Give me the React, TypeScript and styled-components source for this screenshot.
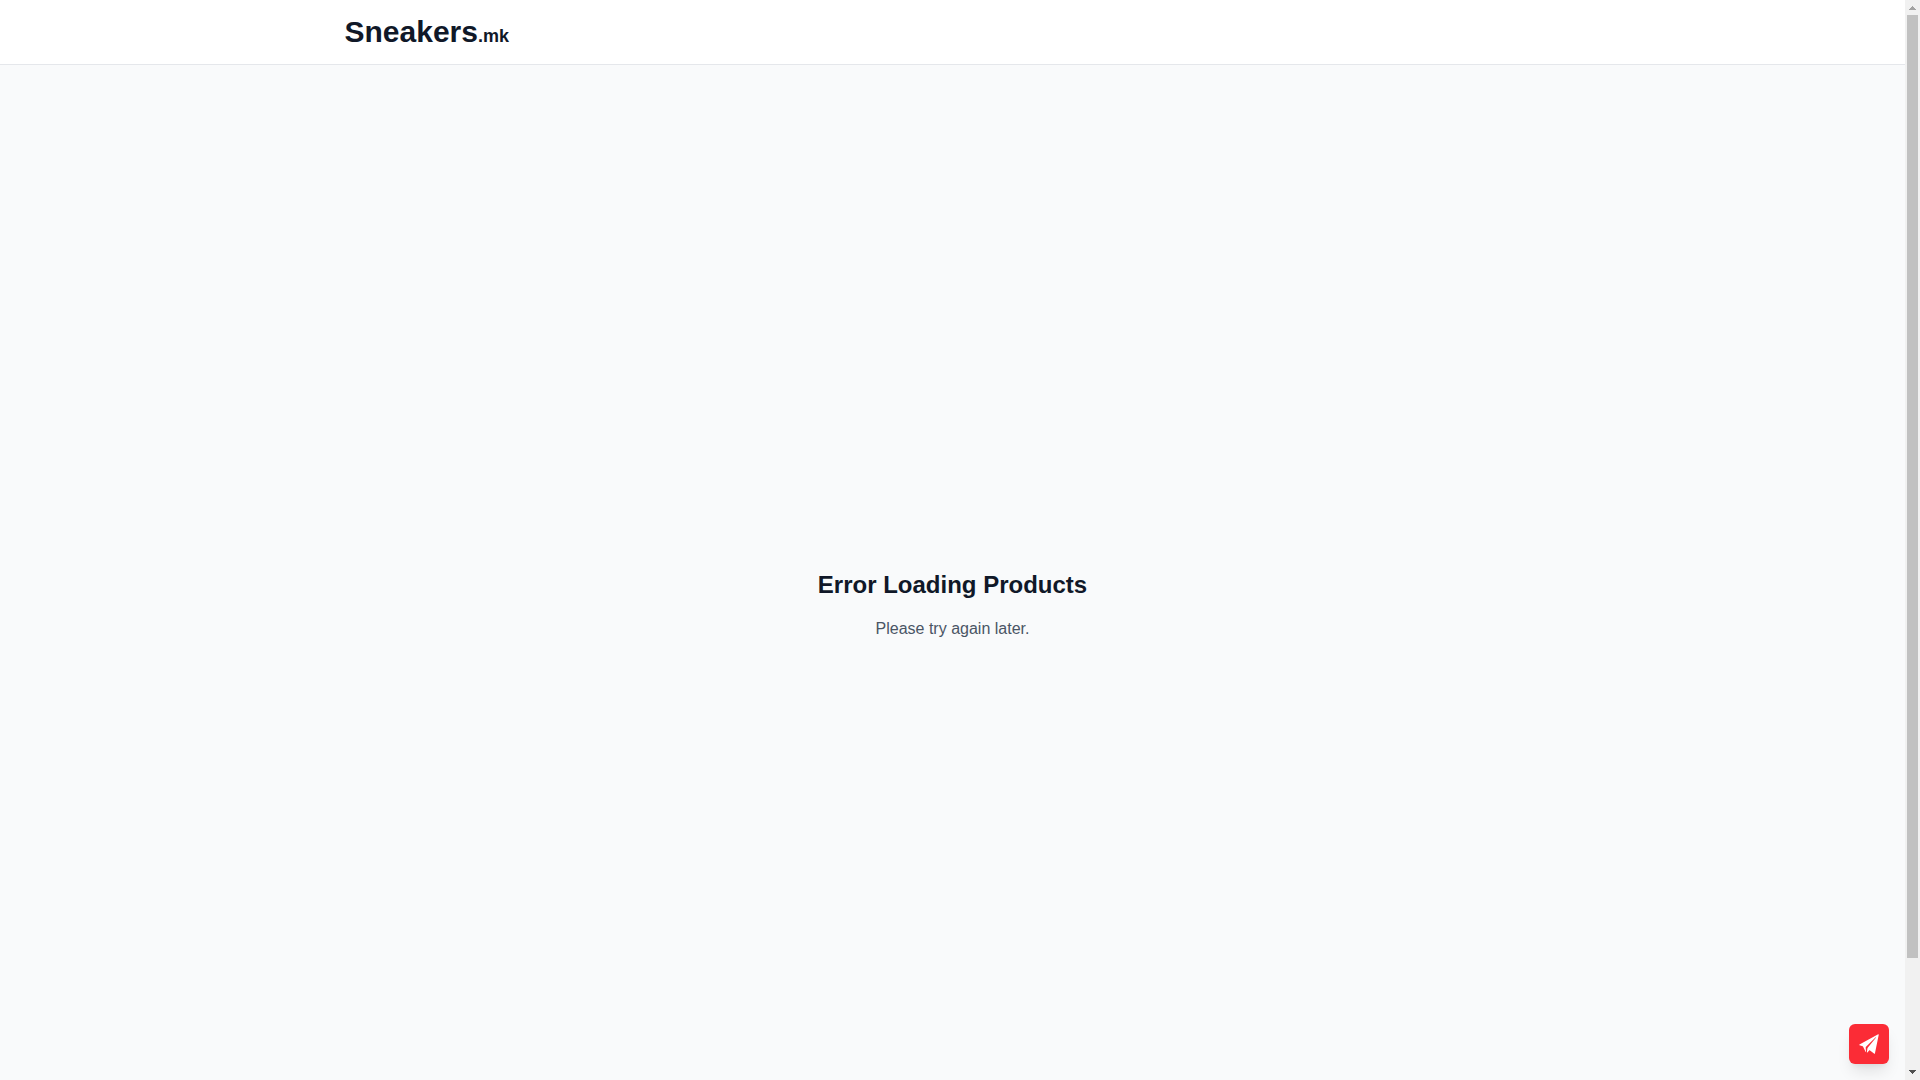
import React from "react";
import styled, { createGlobalStyle } from "styled-components";
import { IoIosPaperPlane } from "react-icons/io";

const GlobalStyle = createGlobalStyle`
  *, *::before, *::after { box-sizing: border-box; }
  body {
    margin: 0;
    background: #f9fafb;
    color: #101828;
    font-family: "Liberation Sans", Arial, sans-serif;
    font-size: 16px;
    line-height: 24px;
  }
`;

const Shell = styled.div`
  display: grid;
  grid-template-columns: minmax(0, 1fr) 15px;
  height: 100vh;
`;

const Page = styled.div`
  position: relative;
  min-height: 0;
  overflow: hidden;
`;

const Header = styled.header`
  background: #ffffff;
  border-bottom: 1px solid #e5e7eb;
`;

const HeaderInner = styled.div`
  display: flex;
  align-items: center;
  height: 64px;
  max-width: 1280px;
  margin: 0 auto;
  padding: 0 32px;
`;

const Logo = styled.a`
  color: #101828;
  font-size: 30px;
  line-height: 36px;
  font-weight: 700;
  text-decoration: none;
`;

const LogoSuffix = styled.span`
  font-size: 18px;
  line-height: 24px;
`;

const Main = styled.main`
  display: flex;
  align-items: center;
  justify-content: center;
  min-height: 100vh;
`;

const Message = styled.div`
  text-align: center;
`;

const Title = styled.h1`
  margin: 0 0 16px;
  font-size: 24px;
  line-height: 32px;
  font-weight: 700;
`;

const Text = styled.p`
  margin: 0;
  color: #4a5565;
`;

const ContactButton = styled.button`
  position: absolute;
  right: 16px;
  bottom: 16px;
  display: flex;
  align-items: center;
  justify-content: center;
  width: 40px;
  height: 40px;
  padding: 0;
  border: 0;
  border-radius: 6px;
  background: #fb2c36;
  color: #ffffff;
  cursor: pointer;
  box-shadow: 0 10px 15px -3px rgba(0, 0, 0, 0.1), 0 4px 6px -4px rgba(0, 0, 0, 0.1);
`;

const Scrollbar = styled.div`
  display: flex;
  flex-direction: column;
  background: #f1f1f1;
`;

const ArrowBox = styled.svg`
  display: block;
  flex: none;
  width: 15px;
  height: 15px;
`;

const Track = styled.div`
  display: flex;
  flex-direction: column;
  flex: 1;
  padding: 0 2px;
`;

const Thumb = styled.div`
  flex: 1080;
  background: #c1c1c1;
`;

const TrackRest = styled.div`
  flex: 122;
`;

export default function App() {
  return (
    <Shell>
      <GlobalStyle />
      <Page>
        <Header>
          <HeaderInner>
            <Logo href="/">
              Sneakers<LogoSuffix>.mk</LogoSuffix>
            </Logo>
          </HeaderInner>
        </Header>
        <Main>
          <Message>
            <Title>Error Loading Products</Title>
            <Text>Please try again later.</Text>
          </Message>
        </Main>
        <ContactButton type="button" aria-label="Contact">
          <IoIosPaperPlane size={24} />
        </ContactButton>
      </Page>
      <Scrollbar aria-hidden="true">
        <ArrowBox viewBox="0 0 15 15" shapeRendering="crispEdges">
          <path d="M7 6h1v1h1v1h1v1h1v1H4V9h1V8h1V7h1z" fill="#a3a3a3" />
        </ArrowBox>
        <Track>
          <Thumb />
          <TrackRest />
        </Track>
        <ArrowBox viewBox="0 0 15 15" shapeRendering="crispEdges">
          <path d="M4 5h7v1h-1v1H9v1H8v1H7V8H6V7H5V6H4z" fill="#505050" />
        </ArrowBox>
      </Scrollbar>
    </Shell>
  );
}
